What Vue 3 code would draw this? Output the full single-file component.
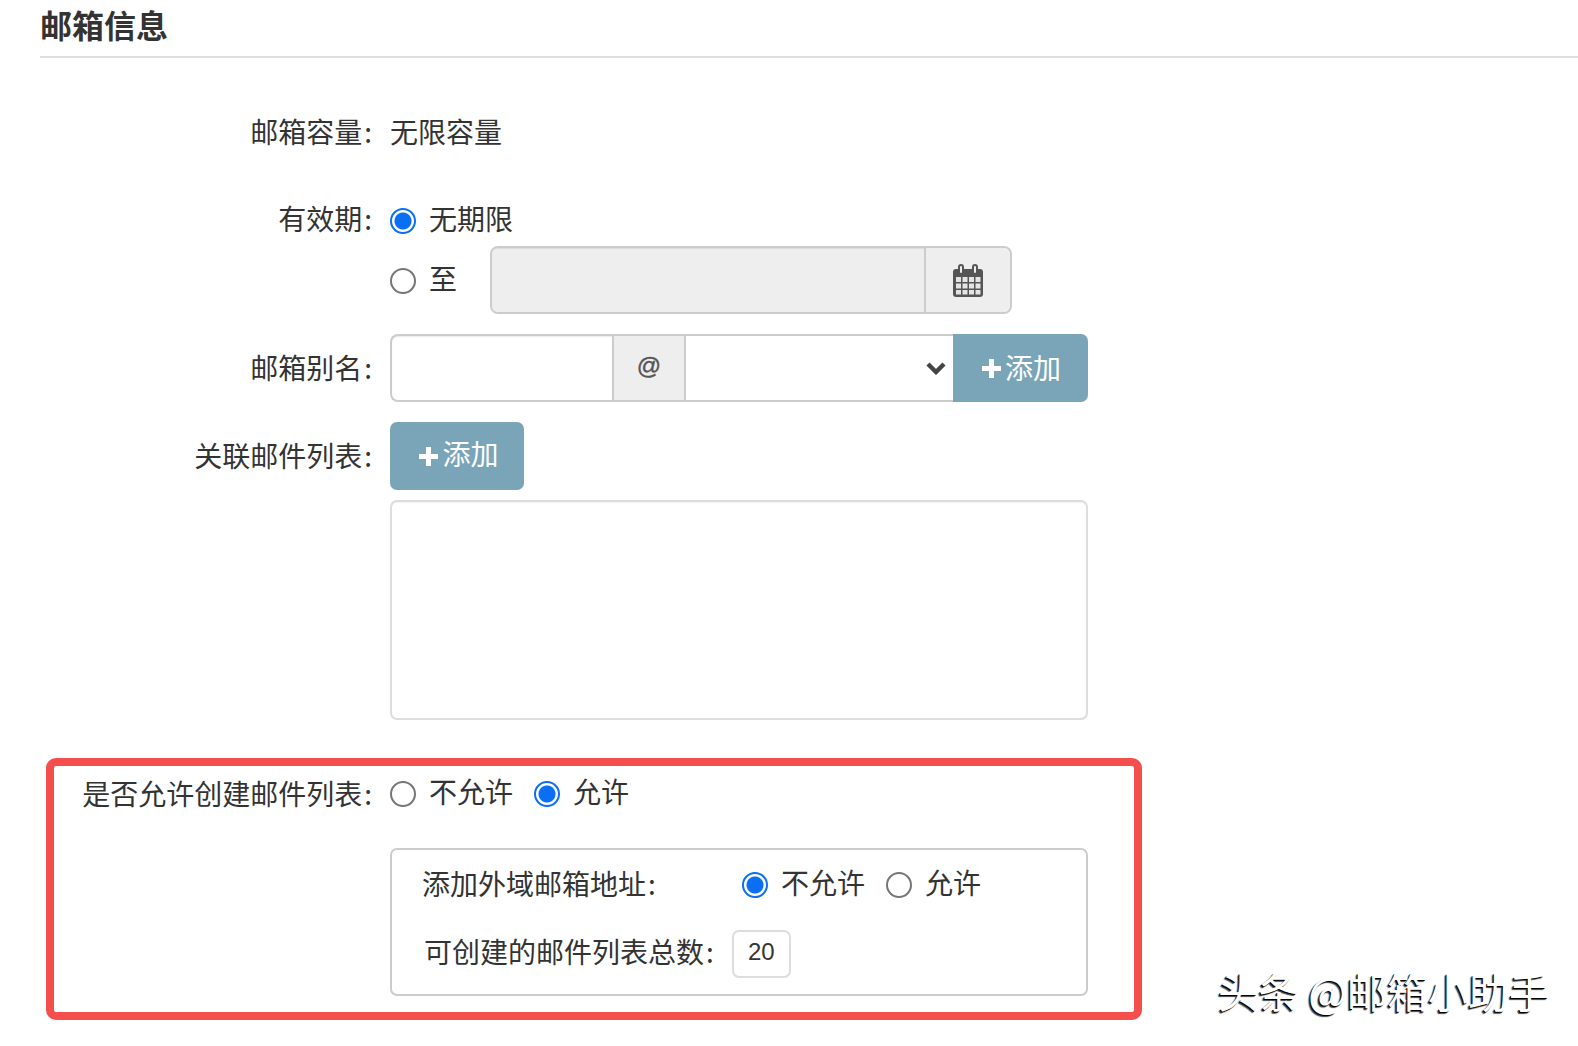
<script setup>
</script>

<template>
  <div class="page">
    <h2 class="title">邮箱信息</h2>

    <div class="row first">
      <div class="label">邮箱容量<i>:</i></div>
      <div class="value">无限容量</div>
    </div>

    <div class="row validity">
      <div class="label">有效期<i>:</i></div>
      <label class="radio"><input type="radio" name="exp" checked /><span>无期限</span></label>
    </div>
    <div class="row until">
      <div></div>
      <div class="until-body">
        <label class="radio"><input type="radio" name="exp" /><span>至</span></label>
        <div class="group date">
          <input class="field disabled grow" disabled />
          <span class="addon">
            <svg width="30" height="33" viewBox="0 0 30 33">
              <rect x="0" y="5" width="30" height="28" rx="3" fill="#555" />
              <rect x="5" y="0" width="6" height="10" rx="3" fill="#555" />
              <rect x="19" y="0" width="6" height="10" rx="3" fill="#555" />
              <rect x="7" y="2" width="2" height="7" rx="1" fill="#eee" />
              <rect x="21" y="2" width="2" height="7" rx="1" fill="#eee" />
              <g fill="#e4e4e4">
                <rect x="3" y="13" width="5" height="5" /><rect x="9.5" y="13" width="5" height="5" /><rect x="16" y="13" width="5" height="5" /><rect x="22.5" y="13" width="5" height="5" />
                <rect x="3" y="19.5" width="5" height="5" /><rect x="9.5" y="19.5" width="5" height="5" /><rect x="16" y="19.5" width="5" height="5" /><rect x="22.5" y="19.5" width="5" height="5" />
                <rect x="3" y="26" width="5" height="4.5" /><rect x="9.5" y="26" width="5" height="4.5" /><rect x="16" y="26" width="5" height="4.5" /><rect x="22.5" y="26" width="5" height="4.5" />
              </g>
            </svg>
          </span>
        </div>
      </div>
    </div>

    <div class="row alias">
      <div class="label">邮箱别名<i>:</i></div>
      <div class="group alias-group">
        <input class="field alias-input" />
        <span class="addon at">@</span>
        <div class="select-wrap">
          <select class="field select"></select>
          <svg class="chevron" width="20" height="14" viewBox="0 0 20 14">
            <path fill="none" stroke="#444" stroke-width="4.4" d="M2 3l8 8 8-8" />
          </svg>
        </div>
        <button class="add joined" type="button">
          <svg width="19" height="19" viewBox="0 0 19 19"><path fill="#fff" d="M7 0h5v7h7v5h-7v7H7v-7H0V7h7z" /></svg>
          <span>添加</span>
        </button>
      </div>
    </div>

    <div class="row list">
      <div class="label">关联邮件列表<i>:</i></div>
      <button class="add single" type="button">
        <svg width="19" height="19" viewBox="0 0 19 19"><path fill="#fff" d="M7 0h5v7h7v5h-7v7H7v-7H0V7h7z" /></svg>
        <span>添加</span>
      </button>
    </div>
    <div class="row area-row">
      <div></div>
      <textarea class="area"></textarea>
    </div>

    <div class="bottom">
      <div class="highlight">
        <div class="row allow">
          <div class="label">是否允许创建邮件列表<i>:</i></div>
          <div class="radios">
            <label class="radio"><input type="radio" name="allow" /><span>不允许</span></label>
            <label class="radio"><input type="radio" name="allow" checked /><span>允许</span></label>
          </div>
        </div>
        <div class="inner">
          <div class="inner-row">
            <div class="inner-label">添加外域邮箱地址<i>:</i></div>
            <div class="radios">
              <label class="radio"><input type="radio" name="ext" checked /><span>不允许</span></label>
              <label class="radio"><input type="radio" name="ext" /><span>允许</span></label>
            </div>
          </div>
          <div class="inner-total">
            <span class="total-label">可创建的邮件列表总数<i>:</i></span>
            <input class="count" value="20" />
          </div>
        </div>
      </div>
      <div class="mark">头条 @邮箱小助手</div>
    </div>
  </div>
</template>

<style scoped>
.page {
  width: 1578px;
  height: 1046px;
  overflow: hidden;
  background: #fff;
  color: #333;
  font-family: "Noto Sans CJK SC", "Liberation Sans", sans-serif;
  font-size: 28px;
  line-height: 40px;
}
i {
  font-style: normal;
  margin-left: 2px;
}
.title {
  margin: 0 0 0 40px;
  height: 58px;
  box-sizing: border-box;
  border-bottom: 2px solid #ddd;
  font-size: 32px;
  font-weight: 700;
  line-height: 49px;
}
.row {
  display: grid;
  grid-template-columns: 390px 1fr;
}
.label {
  padding-right: 18px;
  text-align: right;
  white-space: nowrap;
}
.first { margin-top: 54px; height: 40px; }
.first .label, .first .value { line-height: 38px; }
.validity { margin-top: 48px; height: 40px; }
.validity .label { line-height: 36px; }
.until { margin-top: 6px; }
.until-body { display: flex; align-items: center; gap: 33px; }
.alias { margin-top: 20px; }
.alias .label { line-height: 66px; }
.list { margin-top: 20px; }
.list .label { line-height: 66px; }
.area-row { margin-top: 10px; }

.radio {
  display: inline-flex;
  align-items: center;
  gap: 13px;
}
.radio span { position: relative; top: -2px; }
.radio input {
  appearance: none;
  margin: 2px 0 0;
  width: 26px;
  height: 26px;
  box-sizing: border-box;
  border: 2px solid #767676;
  border-radius: 50%;
  background: #fff;
  flex: none;
}
.radio input:checked {
  border-color: #0a6ff2;
  background: radial-gradient(circle, #0a6ff2 0 8px, #fff 9px);
}
.radios { display: flex; align-items: center; gap: 21px; }

.group {
  display: flex;
  height: 68px;
  box-sizing: border-box;
}
.date {
  width: 522px;
  height: 68px;
  border: 2px solid #ccc;
  border-radius: 8px;
  background: #eee;
  overflow: hidden;
}
.field {
  border: 0;
  margin: 0;
  padding: 0;
  min-width: 0;
  background: #fff;
  outline: 0;
  font: inherit;
}
.grow {
  flex: 1;
  box-shadow: inset 0 1px 1px rgba(0, 0, 0, .08);
}
.disabled { background: #eee; }
.addon {
  display: flex;
  align-items: center;
  justify-content: center;
  background: #eee;
  border-left: 2px solid #ccc;
  box-sizing: border-box;
  color: #555;
}
.date .addon { width: 86px; }
.alias-group { width: 698px; }
.alias-input {
  width: 222px;
  height: 68px;
  box-sizing: border-box;
  border: 2px solid #ccc;
  border-right: 0;
  border-radius: 8px 0 0 8px;
  box-shadow: inset 0 1px 1px rgba(0, 0, 0, .08);
}
.at {
  width: 72px;
  padding-bottom: 4px;
  border-top: 2px solid #ccc;
  border-bottom: 2px solid #ccc;
  font-family: "Liberation Sans", sans-serif;
  font-size: 24px;
  -webkit-text-stroke: .4px #555;
}
.select-wrap {
  position: relative;
  width: 269px;
  height: 68px;
}
.select {
  appearance: none;
  display: block;
  width: 100%;
  height: 68px;
  box-sizing: border-box;
  border: 2px solid #ccc;
  border-right: 0;
  border-radius: 0;
}
.chevron {
  position: absolute;
  right: 7px;
  top: 27px;
  pointer-events: none;
}
.add {
  display: flex;
  align-items: center;
  justify-content: center;
  gap: 4px;
  width: 134px;
  height: 68px;
  padding: 0;
  border: 0;
  border-radius: 7px;
  background: #7aa5b9;
  color: #fff;
  font: inherit;
}
.add span { position: relative; top: -1px; }
.single { padding-left: 4px; }
.single span { top: -3px; }
.joined {
  width: 135px;
  padding-left: 2px;
  border-radius: 0 7px 7px 0;
}
.area {
  display: block;
  width: 698px;
  height: 220px;
  box-sizing: border-box;
  margin: 0;
  padding: 0;
  border: 2px solid #ddd;
  border-radius: 7px;
  outline: 0;
  resize: none;
  background: #fff;
  box-shadow: inset 0 1px 1px rgba(0, 0, 0, .05);
}

.bottom {
  display: flex;
  margin: 38px 0 0 46px;
}
.highlight {
  width: 1096px;
  height: 262px;
  box-sizing: border-box;
  flex: none;
  border: 8px solid #f44f4c;
  border-radius: 10px;
  padding-top: 7px;
}
.allow { grid-template-columns: 336px 1fr; }
.inner {
  width: 698px;
  height: 148px;
  box-sizing: border-box;
  margin: 35px 0 0 336px;
  padding: 14px 0 0 30px;
  border: 2px solid #ccc;
  border-radius: 7px;
}
.inner-row {
  display: flex;
  align-items: center;
  height: 40px;
}
.inner-label {
  width: 320px;
  margin-bottom: 2px;
  white-space: nowrap;
}
.inner-total {
  display: flex;
  align-items: center;
  gap: 18px;
  margin: 26px 0 0 2px;
  white-space: nowrap;
}
.total-label { margin-bottom: 6px; }
.count {
  width: 59px;
  height: 48px;
  box-sizing: border-box;
  margin: 0;
  padding: 0 0 4px;
  border: 2px solid #ddd;
  border-radius: 7px;
  outline: 0;
  text-align: center;
  color: #333;
  font-family: "Liberation Sans", sans-serif;
  font-size: 24px;
}
.mark {
  align-self: flex-end;
  margin: 0 0 5px 76px;
  color: #fff;
  font-size: 40.6px;
  line-height: 48px;
  white-space: nowrap;
  text-shadow: -1px 1px 0 #000, -2px 2px 1px #444;
}
</style>
